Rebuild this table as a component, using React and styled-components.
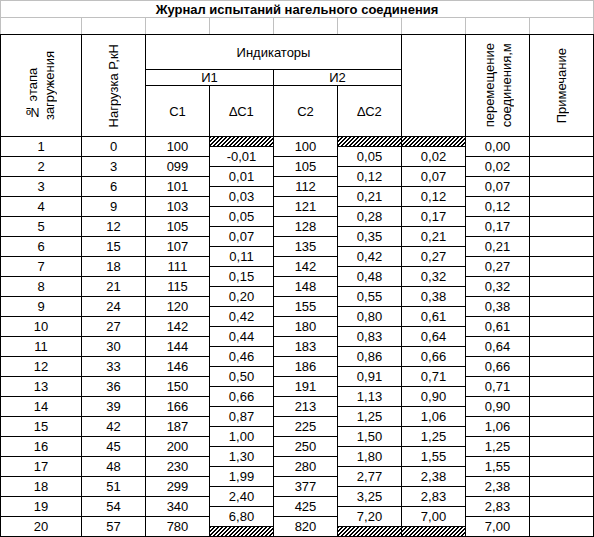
import React from "react";
import styled, { createGlobalStyle } from "styled-components";

const Global = createGlobalStyle`
  html, body { margin: 0; padding: 0; background: #fff; }
  body { font-family: "Liberation Sans", Arial, sans-serif; }
`;

const Page = styled.div`
  width: 594px;
`;

const TopGrid = styled.div`
  display: grid;
  grid-template-columns: 80px repeat(8, 63px);
  grid-template-rows: 16px 16px;
  gap: 1px;
  padding: 1px 1px 0;
  background: #c0c0c0;
`;

const Title = styled.div`
  grid-column: 1 / -1;
  background: #fff;
  display: flex;
  align-items: center;
  justify-content: center;
  font-weight: bold;
  font-size: 13px;
  color: #000;
`;

const Blank = styled.div`
  background: #fff;
`;

const Table = styled.div`
  display: grid;
  grid-template-columns: 80px repeat(8, 63px);
  grid-template-rows: 34px 15px 50px repeat(40, 9px);
  gap: 1px;
  padding: 1px;
  background: #000;
`;

const Cell = styled.div`
  grid-column: ${(p) => p.$col} / span ${(p) => p.$cs || 1};
  grid-row: ${(p) => p.$row} / span ${(p) => p.$rs || 1};
  background: #fff;
  display: flex;
  align-items: center;
  justify-content: center;
  font-size: 13px;
  color: #000;
  white-space: nowrap;
  overflow: hidden;
`;

const Hatch = styled.div`
  grid-column: ${(p) => p.$col};
  grid-row: ${(p) => p.$row};
  background: #fff;
  overflow: hidden;
  svg { display: block; }
`;

const VText = styled.span`
  writing-mode: vertical-rl;
  transform: rotate(180deg);
  text-align: left;
  line-height: 17px;
  font-size: 13px;
  white-space: nowrap;
`;

const c1 = ["100","099","101","103","105","107","111","115","120","142","144","146","150","166","187","200","230","299","340","780"];
const c2 = ["100","105","112","121","128","135","142","148","155","180","183","186","191","213","225","250","280","377","425","820"];
const disp = ["0,00","0,02","0,07","0,12","0,17","0,21","0,27","0,32","0,38","0,61","0,64","0,66","0,71","0,90","1,06","1,25","1,55","2,38","2,83","7,00"];
const dc1 = ["-0,01","0,01","0,03","0,05","0,07","0,11","0,15","0,20","0,42","0,44","0,46","0,50","0,66","0,87","1,00","1,30","1,99","2,40","6,80"];
const dc2 = ["0,05","0,12","0,21","0,28","0,35","0,42","0,48","0,55","0,80","0,83","0,86","0,91","1,13","1,25","1,50","1,80","2,77","3,25","7,20"];
const avg = ["0,02","0,07","0,12","0,17","0,21","0,27","0,32","0,38","0,61","0,64","0,66","0,71","0,90","1,06","1,25","1,55","2,38","2,83","7,00"];

function HatchFill({ id }) {
  return (
    <svg width="63" height="9" shapeRendering="crispEdges">
      <defs>
        <pattern id={id} width="4" height="4" patternUnits="userSpaceOnUse">
          <rect x="3" y="0" width="1" height="1" fill="#000" />
          <rect x="2" y="1" width="1" height="1" fill="#000" />
          <rect x="1" y="2" width="1" height="1" fill="#000" />
          <rect x="0" y="3" width="1" height="1" fill="#000" />
          <rect x="0" y="0" width="1" height="1" fill="#000" />
          <rect x="3" y="1" width="1" height="1" fill="#000" />
          <rect x="2" y="2" width="1" height="1" fill="#000" />
          <rect x="1" y="3" width="1" height="1" fill="#000" />
        </pattern>
      </defs>
      <rect width="63" height="9" fill={`url(#${id})`} />
    </svg>
  );
}

function OffsetColumn({ col, values, name }) {
  return (
    <>
      <Hatch $col={col} $row={4}><HatchFill id={`${name}-top`} /></Hatch>
      {values.map((v, j) => (
        <Cell key={j} $col={col} $row={5 + 2 * j} $rs={2}>{v}</Cell>
      ))}
      <Hatch $col={col} $row={43}><HatchFill id={`${name}-bot`} /></Hatch>
    </>
  );
}

export default function App() {
  const rows = Array.from({ length: 20 }, (_, i) => i);
  return (
    <Page>
      <Global />
      <TopGrid>
        <Title>Журнал испытаний нагельного соединения</Title>
        {Array.from({ length: 9 }, (_, i) => <Blank key={i} />)}
      </TopGrid>
      <Table>
        <Cell $col={1} $row={1} $rs={3}>
          <VText>№ этапа<br />загружения</VText>
        </Cell>
        <Cell $col={2} $row={1} $rs={3}>
          <VText>Нагрузка P,кН</VText>
        </Cell>
        <Cell $col={3} $row={1} $cs={4}>Индикаторы</Cell>
        <Cell $col={3} $row={2} $cs={2}>И1</Cell>
        <Cell $col={5} $row={2} $cs={2}>И2</Cell>
        <Cell $col={3} $row={3}>С1</Cell>
        <Cell $col={4} $row={3}>∆С1</Cell>
        <Cell $col={5} $row={3}>С2</Cell>
        <Cell $col={6} $row={3}>∆С2</Cell>
        <Cell $col={7} $row={1} $rs={3} />
        <Cell $col={8} $row={1} $rs={3}>
          <VText>перемещение<br />соединения,м</VText>
        </Cell>
        <Cell $col={9} $row={1} $rs={3}>
          <VText>Примечание</VText>
        </Cell>

        {rows.map((i) => (
          <React.Fragment key={i}>
            <Cell $col={1} $row={4 + 2 * i} $rs={2}>{i + 1}</Cell>
            <Cell $col={2} $row={4 + 2 * i} $rs={2}>{i * 3}</Cell>
            <Cell $col={3} $row={4 + 2 * i} $rs={2}>{c1[i]}</Cell>
            <Cell $col={5} $row={4 + 2 * i} $rs={2}>{c2[i]}</Cell>
            <Cell $col={8} $row={4 + 2 * i} $rs={2}>{disp[i]}</Cell>
            <Cell $col={9} $row={4 + 2 * i} $rs={2} />
          </React.Fragment>
        ))}
        <OffsetColumn col={4} values={dc1} name="d1" />
        <OffsetColumn col={6} values={dc2} name="d2" />
        <OffsetColumn col={7} values={avg} name="av" />
      </Table>
    </Page>
  );
}
